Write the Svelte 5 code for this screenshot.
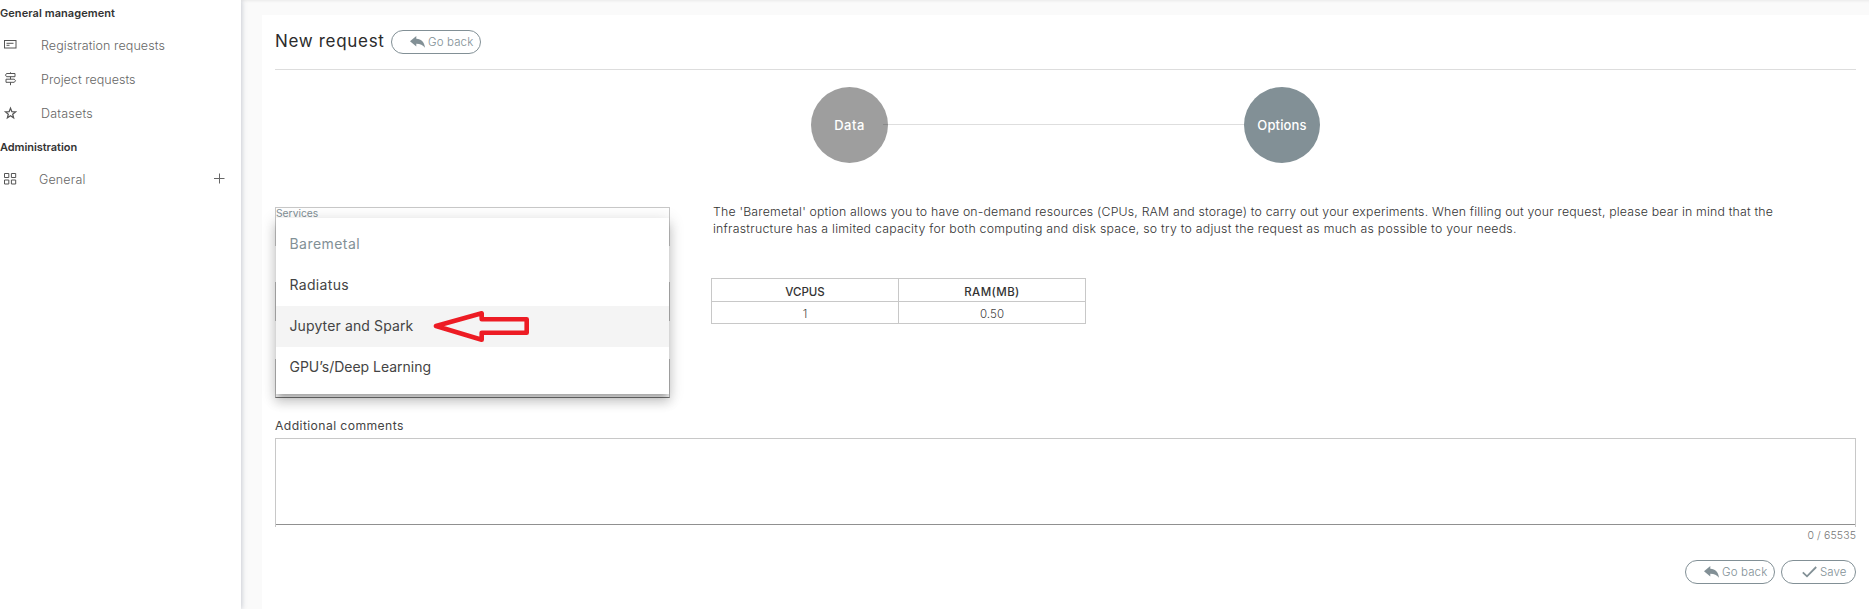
<script>
  const management = [
    { label: 'Registration requests', icon: 'card', spacing: 0.09 },
    { label: 'Project requests', icon: 'sign', spacing: 0.03 },
    { label: 'Datasets', icon: 'star', spacing: 0.21 }
  ];
  const services = [
    { label: 'Baremetal', spacing: 0.44 },
    { label: 'Radiatus', spacing: 0.33 },
    { label: 'Jupyter and Spark', spacing: 0.12 },
    { label: 'GPU’s/Deep Learning', spacing: -0.02 }
  ];
  let selected = $state('Baremetal');
  let active = $state('Jupyter and Spark');
  let comments = $state('');
</script>

{#snippet glyph(name)}
  <svg class="glyph" viewBox="0 0 14 14" fill="none" stroke="currentColor">
    {#if name === 'card'}
      <rect x="1.5" y="2.5" width="11.5" height="7.5" />
      <path d="M3.5 5.3h7M3.5 7.3h3" />
    {:else if name === 'sign'}
      <path d="M3.5 1.5H12v3.2H3.5L2.5 3.1zM3 7.2h8.3l1.2 1.5-1.2 1.6H3zM7.5 4.7v2.5M7.5 10.3v2.9M7.5 .3v1.2" />
    {:else if name === 'star'}
      <path d="M7.5 2.2 8.9 5.7 12.5 5.9 9.7 8.2 10.6 11.8 7.5 9.8 4.4 11.8 5.3 8.2 2.5 5.9 6.1 5.7z" stroke-width="1.25" />
    {:else}
      <path d="M1.5 1.5h4.3v4H1.5zM8.4 1.5h4.3v4H8.4zM1.5 8h4.3v4H1.5zM8.4 8h4.3v4H8.4z" />
    {/if}
  </svg>
{/snippet}

{#snippet backButton()}
  <button class="pill">
    <svg width="15" height="12" viewBox="0 0 15 12" fill="currentColor">
      <path d="M0 5.2 6.3 0v2.8C11.5 3 14.4 6 15 11.8 12.9 8.8 10.3 7.7 6.3 7.7v2.8z" />
    </svg>
    <span class="back-text">Go back</span>
  </button>
{/snippet}

<div class="app">
  <nav>
    <h2>General management</h2>
    {#each management as item}
      <a class="entry" href="#top">
        {@render glyph(item.icon)}
        <span style:letter-spacing="{item.spacing}px">{item.label}</span>
      </a>
    {/each}
    <h2 class="admin">Administration</h2>
    <a class="entry group" href="#top">
      {@render glyph('grid')}
      <span>General</span>
      <svg class="plus" width="11" height="11" viewBox="0 0 11 11" stroke="currentColor"><path d="M0 5.5h10.5M5.5 .5v10" /></svg>
    </a>
  </nav>

  <main>
    <section class="sheet">
      <header>
        <h1>New request</h1>
        {@render backButton()}
      </header>

      <div class="steps">
        <div class="step">Data</div>
        <div class="track"></div>
        <div class="step current">Options</div>
      </div>

      <div class="columns">
        <div class="fields">
          <div class="field first"><span class="caption">Services</span></div>
          <div class="field middle"></div>
          <div class="field last"></div>
          <div class="menu">
            {#each services as s}
              <button
                class="option"
                class:selected={s.label === selected}
                class:active={s.label === active}
                style:letter-spacing="{s.spacing}px"
                onclick={() => (selected = s.label)}
                onmouseenter={() => (active = s.label)}>{s.label}</button>
            {/each}
          </div>
          <svg class="pointer" width="100" height="36" viewBox="0 0 100 36">
            <path d="M6 18 51.7 5.3V11.3H96.7V24.7H51.7V31.7z" />
          </svg>
        </div>

        <div class="details">
          <p>
            <span class="line-a">The 'Baremetal' option allows you to have on-demand resources (CPUs, RAM and storage) to carry out your experiments. When filling out your request, please bear in mind that the</span>
            <span class="line-b">infrastructure has a limited capacity for both computing and disk space, so try to adjust the request as much as possible to your needs.</span>
          </p>
          <table>
            <thead><tr><th>VCPUS</th><th class="ram">RAM(MB)</th></tr></thead>
            <tbody><tr><td>1</td><td>0.50</td></tr></tbody>
          </table>
        </div>
      </div>

      <label class="comments-label" for="comments">Additional comments</label>
      <div class="area"><textarea id="comments" bind:value={comments}></textarea></div>
      <div class="counter">{comments.length} / 65535</div>
      <footer>
        {@render backButton()}
        <button class="pill save">
          <svg width="15" height="12" viewBox="0 0 15 12" fill="none" stroke="currentColor" stroke-width="1.8"><path d="M.8 6.3 5 10.3 14.2 1" /></svg>
          <span>Save</span>
        </button>
      </footer>
    </section>
  </main>
</div>

<style>
  :global(body) { margin: 0; overflow: hidden; }
  .app { display: flex; height: 609px; background: #fafafa; font-family: Inter, sans-serif; color: #333; }
  .app, .app :global(*) { box-sizing: border-box; }
  nav { width: 241px; flex: none; background: #fff; box-shadow: 1px 0 5px rgba(60, 75, 100, .26); z-index: 1; }
  h2 { margin: 0 0 2px; font-size: 11px; line-height: 27px; font-weight: 600; letter-spacing: .06px; }
  .admin { margin: 3px 0 2px; letter-spacing: -.05px; }
  .entry { display: flex; align-items: center; height: 34px; padding-left: 3px; color: #666; text-decoration: none; font-size: 12.5px; line-height: 16px; font-weight: 300; }
  .entry span { margin: 0 0 0 24px; }
  .glyph { width: 14px; height: 14px; flex: none; margin-top: -2px; color: #555; }
  .entry.group span { margin-left: 22px; letter-spacing: .15px; }
  .plus { margin: -3px 16px 0 auto; }
  main { flex: 1; min-width: 0; padding: 15px 0 0 21px; box-shadow: inset 0 3px 3px -2px rgba(0, 0, 0, .07); }
  .sheet { height: 594px; background: #fff; padding: 0 13px 0 13px; display: flex; flex-direction: column; }
  header { display: flex; align-items: flex-start; height: 55px; padding-top: 15px; border-bottom: 1px solid #ddd; }
  h1 { margin: 0; width: 116px; font-size: 17px; font-weight: 400; line-height: 23px; letter-spacing: .68px; color: #2b2b2b; white-space: nowrap; }
  .pill { display: flex; align-items: center; width: 90px; height: 24px; padding: 0 0 0 18px; gap: 3px; border: 1px solid #829096; border-radius: 12px; background: #fff; color: #829096; font: 300 11.5px Inter, sans-serif; white-space: nowrap; letter-spacing: .05px; }
  .back-text { letter-spacing: .13px; }
  .pill svg { flex: none; }
  .save { width: 75px; padding-left: 20px; }
  .steps { display: flex; align-items: center; height: 77px; margin: 17px 0 0 536px; }
  .step { width: 77px; height: 76px; flex: none; border-radius: 50%; background: #9e9e9e; color: #fff; display: flex; align-items: center; justify-content: center; padding-bottom: 1px; margin-bottom: 1px; font-size: 13px; font-weight: 500; letter-spacing: .5px; }
  .current { width: 76px; background: #829096; letter-spacing: .15px; }
  .track { width: 361px; height: 1px; margin: 0 0 2px -5px; background: rgba(0, 0, 0, .13); }
  .columns { display: flex; height: 191px; margin-top: 43px; }
  .fields { position: relative; width: 395px; flex: none; }
  .field { height: 39px; border: solid #bbb; border-width: 0 1px; }
  .first { border-top-width: 1px; border-color: #c8c8c8; }
  .caption { display: block; font-size: 10.3px; line-height: 11px; color: #829096; }
  .middle { margin-top: 36px; }
  .last { margin-top: 38px; border-bottom: 1px solid #777; }
  .menu { position: absolute; left: 1px; right: 1px; top: 11px; height: 176px; padding-top: 6px; background: #fff; box-shadow: 0 5px 5px -3px rgba(0, 0, 0, .2), 0 8px 10px 1px rgba(0, 0, 0, .14), 0 3px 14px 2px rgba(0, 0, 0, .12); }
  .option { display: block; width: 100%; height: 41px; padding: 0 13.5px 2px; border: 0; background: none; text-align: left; font: 400 14px Inter, sans-serif; color: #444; }
  .selected { color: #829096; }
  .active { background: #f4f4f4; }
  .pointer { position: absolute; left: 155px; top: 101px; fill: none; stroke: #ed1c24; stroke-width: 4.6; stroke-linejoin: round; }
  .details { flex: 1; min-width: 0; padding-left: 41px; }
  p { margin: -4px 0 0 2px; font-size: 12.3px; line-height: 17px; font-weight: 300; color: #333; white-space: nowrap; }
  p span { display: block; }
  .line-a { letter-spacing: .186px; }
  .line-b { letter-spacing: .25px; }
  table { width: 375px; margin-top: 41px; table-layout: fixed; border-collapse: collapse; font-size: 11.5px; text-align: center; }
  th, td { border: 1px solid #c8c8c8; padding: 0; }
  th { height: 23px; font-weight: 500; line-height: 18px; padding-top: 4px; }
  td { height: 22px; font-weight: 300; line-height: 17px; color: #444; padding-top: 4px; letter-spacing: .1px; }
  .ram { letter-spacing: .4px; }
  .comments-label { margin-top: 19px; font-size: 12.2px; line-height: 18px; letter-spacing: .4px; color: #444; }
  .area { height: 89px; margin-top: 3px; border: 1px solid #c8c8c8; border-bottom: 0; padding-bottom: 2px; }
  textarea { display: block; width: 100%; height: 86px; resize: none; outline: 0; border: 0; border-bottom: 1px solid #909090; background: #fff; font: inherit; }
  .counter { margin-top: 1px; text-align: right; font-size: 10.5px; line-height: 16px; font-weight: 300; letter-spacing: .13px; color: #777; }
  footer { display: flex; justify-content: flex-end; gap: 6px; margin-top: 16px; }
</style>
